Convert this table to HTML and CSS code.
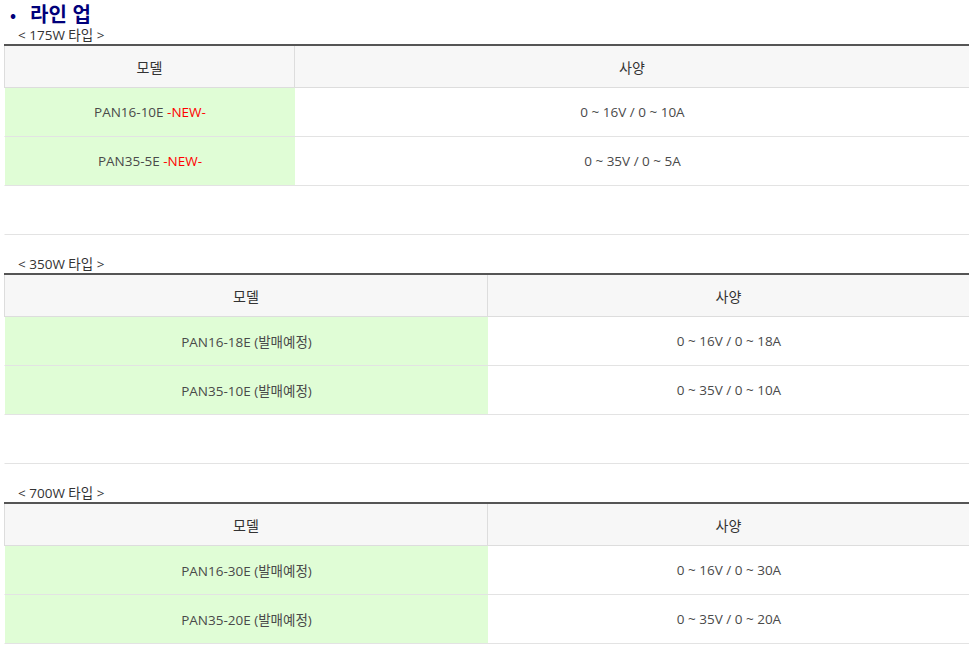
FILE: index.html
```html
<!DOCTYPE html>
<html lang="ko">
<head>
<meta charset="utf-8">
<link rel="stylesheet" href="styles.css">
</head>
<body>
<h2 class="title"><span class="bullet">•</span>라인 업</h2>

<section class="group first">
  <div class="label">&lt; 175W 타입 &gt;</div>
  <table class="spec">
    <colgroup><col class="c30"><col></colgroup>
    <thead><tr><th>모델</th><th>사양</th></tr></thead>
    <tbody>
      <tr><td class="model">PAN16-10E <span class="new">-NEW-</span></td><td>0 ~ 16V / 0 ~ 10A</td></tr>
      <tr><td class="model">PAN35-5E <span class="new">-NEW-</span></td><td>0 ~ 35V / 0 ~ 5A</td></tr>
      <tr class="empty"><td></td><td></td></tr>
    </tbody>
  </table>
</section>

<section class="group">
  <div class="label">&lt; 350W 타입 &gt;</div>
  <table class="spec">
    <colgroup><col class="c50"><col></colgroup>
    <thead><tr><th>모델</th><th>사양</th></tr></thead>
    <tbody>
      <tr><td class="model">PAN16-18E (발매예정)</td><td>0 ~ 16V / 0 ~ 18A</td></tr>
      <tr><td class="model">PAN35-10E (발매예정)</td><td>0 ~ 35V / 0 ~ 10A</td></tr>
      <tr class="empty"><td></td><td></td></tr>
    </tbody>
  </table>
</section>

<section class="group">
  <div class="label">&lt; 700W 타입 &gt;</div>
  <table class="spec">
    <colgroup><col class="c50"><col></colgroup>
    <thead><tr><th>모델</th><th>사양</th></tr></thead>
    <tbody>
      <tr><td class="model">PAN16-30E (발매예정)</td><td>0 ~ 16V / 0 ~ 30A</td></tr>
      <tr><td class="model">PAN35-20E (발매예정)</td><td>0 ~ 35V / 0 ~ 20A</td></tr>
    </tbody>
  </table>
</section>
</body>
</html>
```
FILE: styles.css
```css
body {
  margin: 0 4px;
  background: #fff;
  font-family: "Open Sans", "Noto Sans CJK KR", sans-serif;
  color: #444;
}
.title {
  margin: 0;
  height: 27px;
  line-height: 28px;
  font-size: 20px;
  font-weight: bold;
  color: #00007a;
  font-family: "Noto Sans CJK KR", sans-serif;
  padding-left: 6px;
}
.bullet {
  display: inline-block;
  width: 20px;
  font-size: 16px;
  vertical-align: top;
}
.group { margin-top: 21px; }
.group.first { margin-top: 0; }
.label {
  height: 17px;
  line-height: 17px;
  font-size: 13.5px;
  color: #333;
  padding-left: 14px;
}
.spec {
  width: 966px;
  border-collapse: separate;
  border-spacing: 0;
  table-layout: fixed;
  border-top: 2px solid #555;
}
.c30 { width: 291px; }
.c50 { width: 484px; }
.spec th {
  box-sizing: border-box;
  height: 42px;
  padding: 0;
  background: #f7f7f7;
  border-right: 1px solid #ddd;
  border-bottom: 1px solid #ddd;
  font-weight: normal;
  font-size: 14px;
  color: #333;
}
.spec th:first-child { border-left: 1px solid #ddd; }
.spec td {
  box-sizing: border-box;
  height: 49px;
  padding: 0;
  border-bottom: 1px solid #e3e3e3;
  text-align: center;
  font-size: 13.5px;
  color: #4a4a4a;
}
.spec td:first-child { border-left: 1px solid #fff; }
.spec td.model { background: #e0fdd6; }
.spec tr.empty td { background: none; }
.new { color: #ff0000; }
```
